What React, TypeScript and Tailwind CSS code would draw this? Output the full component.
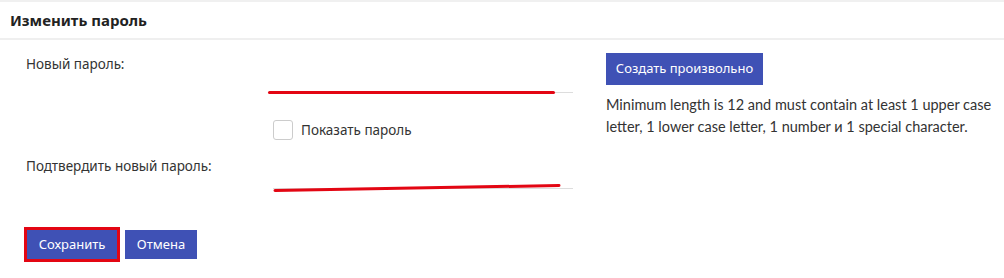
export default function App() {
  return (
    <div className="w-[1004px] h-[278px] bg-white text-[#333] overflow-hidden" style={{ fontFamily: '"Noto Sans", "Open Sans", sans-serif' }}>
      <div className="h-[2px] bg-[#f0f0f0]" />
      {/* Header */}
      <div className="h-[38px] flex items-center px-[10px] border-b-2 border-[#efefef]">
        <h2 className="text-[15px] font-bold text-[#222]">Изменить пароль</h2>
      </div>

      <div className="flex">
        {/* Form column */}
        <div className="pl-[26px] shrink-0">
          <div className="flex h-[53px]">
            <label className="w-[242px] pt-[15px] text-[13.5px] leading-[18px]">Новый пароль:</label>
            <div className="relative w-[305px] border-b border-[#dddddd]">
              <div className="absolute left-0 bottom-[-2px] w-[287px] h-[3px] rounded-full bg-[#e30613]" />
            </div>
          </div>

          <div className="flex h-[61px]">
            <div className="w-[247px]" />
            <label className="flex items-center gap-[8px] pt-[27px] h-fit text-[13.5px] leading-[20px]">
              <span className="w-[20px] h-[20px] rounded-[3px] border border-[#cccccc] bg-white" />
              Показать пароль
            </label>
          </div>

          <div className="flex h-[35px]">
            <label className="w-[247px] pt-[3px] text-[13.5px] leading-[18px]">Подтвердить новый пароль:</label>
            <div className="relative w-[300px] border-b border-[#dddddd]">
              <svg className="absolute left-0 top-[29px]" width="290" height="10" viewBox="0 0 290 10">
                <line x1="2" y1="7.5" x2="286" y2="2.5" stroke="#e30613" strokeWidth="3" strokeLinecap="round" />
              </svg>
            </div>
          </div>

          <div className="flex gap-[8px] mt-[41px] pl-[1px]">
            <div className="outline-[3px] outline-[#e30613] outline">
              <button className="h-[29px] w-[90px] bg-[#3f51b5] text-white text-[13px]">Сохранить</button>
            </div>
            <button className="h-[29px] w-[72px] bg-[#3f51b5] text-white text-[13px]">Отмена</button>
          </div>
        </div>

        {/* Right column */}
        <div className="pl-[33px] pt-[13px] shrink-0">
          <button className="h-[32px] w-[157px] bg-[#3f51b5] text-white text-[13px]">Создать произвольно</button>
          <p className="mt-[9px] text-[14.5px] leading-[22px] whitespace-nowrap" style={{ fontFamily: 'Lato, "Noto Sans", sans-serif' }}>
            Minimum length is 12 and must contain at least 1 upper case
            <br />
            letter, 1 lower case letter, 1 number и 1 special character.
          </p>
        </div>
      </div>
    </div>
  );
}
